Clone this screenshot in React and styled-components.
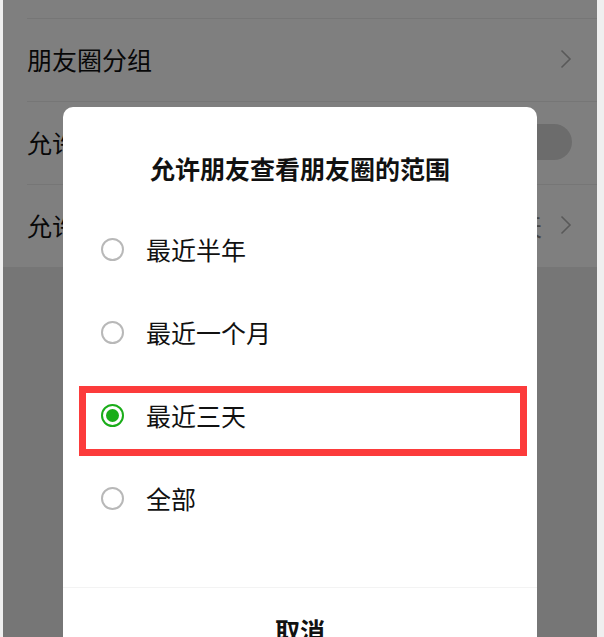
import React, { useState } from 'react'
import styled, { createGlobalStyle } from 'styled-components'

const GlobalStyle = createGlobalStyle`
  html, body {
    margin: 0;
    padding: 0;
    background: #efefef;
  }
  body {
    font-family: "Noto Sans CJK SC", "Noto Sans", sans-serif;
  }
`

const Screen = styled.div`
  position: relative;
  width: 594px;
  height: 637px;
  margin-left: 3px;
  overflow: hidden;
  background: #ededed;
`

const Panel = styled.div`
  background: #fff;
  padding-top: 18px;
`

const Row = styled.div`
  box-sizing: border-box;
  height: 83px;
  margin-left: 24px;
  padding: 0 25px 2px 0;
  display: flex;
  align-items: center;
  gap: 18px;
  border-top: 1px solid #ececec;
`

const Label = styled.span`
  flex: 1;
  font-size: 25px;
  color: #111;
  white-space: nowrap;
  overflow: hidden;
`

const Value = styled.span`
  font-size: 24px;
  color: #888;
  white-space: nowrap;
`

const Toggle = styled.div`
  width: 64px;
  height: 36px;
  border-radius: 18px;
  background: #d8d8d8;
`

const Chevron = () => (
  <svg width="12" height="20" viewBox="0 0 12 20">
    <polyline points="1.5,1.5 10,10 1.5,18.5" fill="none" stroke="#b2b2b2" strokeWidth="1.6" />
  </svg>
)

const Overlay = styled.div`
  position: absolute;
  inset: 0;
  background: rgba(0, 0, 0, 0.5);
  display: flex;
  justify-content: center;
  align-items: flex-start;
  padding-top: 107px;
`

const Dialog = styled.div`
  width: 474px;
  background: #fff;
  border-radius: 10px;
  flex-shrink: 0;
`

const Title = styled.h2`
  margin: 0;
  padding: 43px 0 22px;
  line-height: 36px;
  font-size: 25px;
  font-weight: 700;
  text-align: center;
  color: #111;
`

const Options = styled.div`
  padding-bottom: 47px;
`

const Option = styled.div`
  position: relative;
  box-sizing: border-box;
  height: 83px;
  display: flex;
  align-items: center;
  gap: 22px;
  padding: 0 0 1px 38px;
  cursor: pointer;
`

const Radio = styled.span`
  box-sizing: border-box;
  width: 23px;
  height: 23px;
  border-radius: 50%;
  border: 2px solid ${p => (p.checked ? '#1aad19' : '#b8b8b8')};
  display: flex;
  align-items: center;
  justify-content: center;

  &::after {
    content: "";
    width: 13px;
    height: 13px;
    border-radius: 50%;
    background: ${p => (p.checked ? '#1aad19' : 'transparent')};
  }
`

const OptionText = styled.span`
  font-size: 25px;
  color: #111;
`

const Highlight = styled.div`
  position: absolute;
  top: 12px;
  left: 16px;
  right: 10px;
  bottom: 1px;
  border: 7px solid #fc3b3b;
  pointer-events: none;
`

const Footer = styled.div`
  height: 84px;
  border-top: 1px solid #f3f3f3;
  display: flex;
  align-items: center;
  justify-content: center;
  font-size: 25px;
  font-weight: 700;
  color: #111;
`

const choices = ['最近半年', '最近一个月', '最近三天', '全部']

export default function App() {
  const [picked, setPicked] = useState('最近三天')

  return (
    <>
      <GlobalStyle />
      <Screen>
        <Panel>
          <Row>
            <Label>朋友圈分组</Label>
            <Chevron />
          </Row>
          <Row>
            <Label>允许陌生人查看十条朋友圈</Label>
            <Toggle />
          </Row>
          <Row>
            <Label>允许朋友查看朋友圈的范围</Label>
            <Value>{picked}</Value>
            <Chevron />
          </Row>
        </Panel>
        <Overlay>
          <Dialog>
            <Title>允许朋友查看朋友圈的范围</Title>
            <Options>
              {choices.map(c => (
                <Option key={c} onClick={() => setPicked(c)}>
                  <Radio checked={c === picked} />
                  <OptionText>{c}</OptionText>
                  {c === '最近三天' && <Highlight />}
                </Option>
              ))}
            </Options>
            <Footer>取消</Footer>
          </Dialog>
        </Overlay>
      </Screen>
    </>
  )
}
